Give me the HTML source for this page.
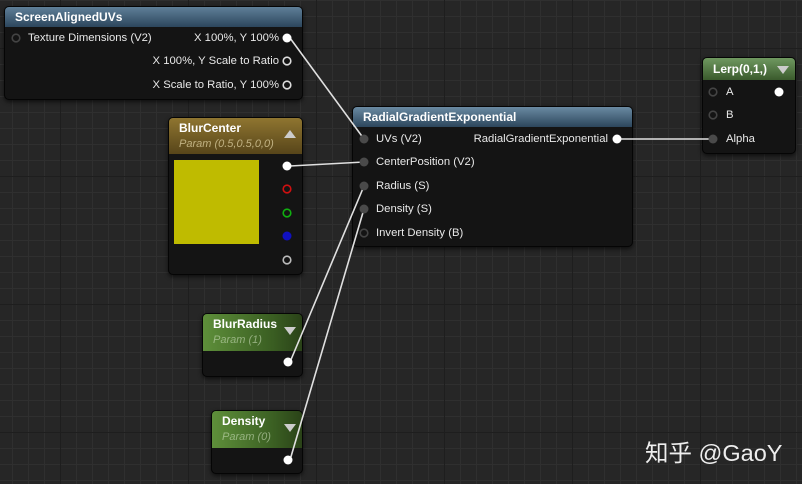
<!DOCTYPE html>
<html><head><meta charset="utf-8"><style>
body{margin:0;width:802px;height:484px;overflow:hidden;font-family:"Liberation Sans",sans-serif;}
#bg{position:absolute;left:0;top:0;width:802px;height:484px;background-color:#262626;
background-image:linear-gradient(#1e1e1e 1px,transparent 1px),linear-gradient(90deg,#1e1e1e 1px,transparent 1px),linear-gradient(#2f2f2f 1px,transparent 1px),linear-gradient(90deg,#2f2f2f 1px,transparent 1px);
background-size:128px 128px,128px 128px,16px 16px,16px 16px;background-position:60px 48px,60px 48px,12px 0,12px 0;}
.n{position:absolute;background:#141414;border:1px solid #050505;border-radius:5px;box-shadow:0 2px 4px rgba(0,0,0,.6);overflow:hidden}
.h{color:#fff;font-weight:bold;font-size:12px;padding-left:10px;box-sizing:border-box}
.t{position:absolute;color:#e8e8e8;font-size:11.3px;white-space:nowrap}
.sub{color:#bfbfbf;font-style:italic;font-weight:normal;font-size:11px;opacity:.6}
svg{position:absolute;left:0;top:0}
</style></head><body>
<div id="bg"></div>
<div class="n" style="left:4px;top:6px;width:297px;height:92px"><div class="h" style="height:20px;line-height:20px;background:linear-gradient(#5f7f98,#2c465c)">ScreenAlignedUVs</div></div>
<div class="n" style="left:168px;top:117px;width:133px;height:156px"><div class="h" style="height:36px;padding-top:3px;line-height:15px;background:linear-gradient(#8f7530,#57451a)">BlurCenter<br><span class="sub" style="opacity:.8;color:#d6c89a">Param (0.5,0.5,0,0)</span></div>
<div style="position:absolute;left:5px;top:42px;width:85px;height:84px;background:#bfbb00"></div>
<div style="position:absolute;right:6px;top:12px;width:0;height:0;border-left:6px solid transparent;border-right:6px solid transparent;border-bottom:8px solid #ccc"></div></div>
<div class="n" style="left:352px;top:106px;width:279px;height:139px"><div class="h" style="height:20px;line-height:20px;background:linear-gradient(#6a8aa2,#2c465c)">RadialGradientExponential</div></div>
<div class="n" style="left:702px;top:57px;width:92px;height:95px"><div class="h" style="height:22px;line-height:22px;background:linear-gradient(#6f9860,#3a5a2c)">Lerp(0,1,)</div>
<div style="position:absolute;right:6px;top:8px;border-left:6px solid transparent;border-right:6px solid transparent;border-top:8px solid #ccc"></div></div>
<div class="n" style="left:202px;top:313px;width:99px;height:62px"><div class="h" style="height:37px;padding-top:3px;line-height:15px;background:linear-gradient(90deg,#5e8f3a,#3a5e22 70%,#2a4218)">BlurRadius<br><span class="sub" style="color:#c9dcb8">Param (1)</span></div>
<div style="position:absolute;right:6px;top:13px;border-left:6px solid transparent;border-right:6px solid transparent;border-top:8px solid #ccc"></div></div>
<div class="n" style="left:211px;top:410px;width:90px;height:62px"><div class="h" style="height:37px;padding-top:3px;line-height:15px;background:linear-gradient(90deg,#5e8f3a,#3a5e22 70%,#2a4218)">Density<br><span class="sub" style="color:#c9dcb8">Param (0)</span></div>
<div style="position:absolute;right:6px;top:13px;border-left:6px solid transparent;border-right:6px solid transparent;border-top:8px solid #ccc"></div></div>

<div class="t" style="left:28px;top:32px">Texture Dimensions (V2)</div>
<div class="t" style="right:523px;top:32px">X 100%, Y 100%</div>
<div class="t" style="right:523px;top:55px">X 100%, Y Scale to Ratio</div>
<div class="t" style="right:523px;top:79px">X Scale to Ratio, Y 100%</div>
<div class="t" style="left:376px;top:133px">UVs (V2)</div>
<div class="t" style="left:376px;top:156px">CenterPosition (V2)</div>
<div class="t" style="left:376px;top:180px">Radius (S)</div>
<div class="t" style="left:376px;top:203px">Density (S)</div>
<div class="t" style="left:376px;top:227px">Invert Density (B)</div>
<div class="t" style="right:194px;top:133px">RadialGradientExponential</div>
<div class="t" style="left:726px;top:86px">A</div>
<div class="t" style="left:726px;top:109px">B</div>
<div class="t" style="left:726px;top:133px">Alpha</div>
<div style="position:absolute;left:645px;top:434px;color:#eee;font-size:23.5px;font-family:'Liberation Sans','Noto Sans CJK SC',sans-serif;white-space:nowrap">知乎 @GaoY</div>

<svg width="802" height="484">
<g stroke="#e0e0e0" stroke-width="1.6" fill="none">
<path d="M290 38 L364 139"/><path d="M290 166 L364 162"/><path d="M290 362 L364 186"/><path d="M290 460 L364 209"/><path d="M620 139 L712 139"/>
</g>
<g fill="#fff"><circle cx="287" cy="38" r="4.5"/><circle cx="287" cy="166" r="4.5"/><circle cx="288" cy="362" r="4.5"/><circle cx="288" cy="460" r="4.5"/><circle cx="617" cy="139" r="4.5"/><circle cx="779" cy="92" r="4.5"/></g>
<g fill="none" stroke-width="1.6"><circle cx="287" cy="61" r="3.8" stroke="#ddd"/><circle cx="287" cy="85" r="3.8" stroke="#ddd"/><circle cx="287" cy="189" r="3.8" stroke="#d01010"/><circle cx="287" cy="213" r="3.8" stroke="#10b010"/><circle cx="287" cy="260" r="3.8" stroke="#bbb"/>
<circle cx="16" cy="38" r="3.8" stroke="#444"/><circle cx="364" cy="233" r="3.8" stroke="#444"/><circle cx="713" cy="92" r="3.8" stroke="#444"/><circle cx="713" cy="115" r="3.8" stroke="#444"/></g>
<circle cx="287" cy="236" r="4.5" fill="#1010c0"/>
<g fill="#4a4a4a"><circle cx="364" cy="139" r="4.5"/><circle cx="364" cy="162" r="4.5"/><circle cx="364" cy="186" r="4.5"/><circle cx="364" cy="209" r="4.5"/><circle cx="713" cy="139" r="4.5"/></g>
</svg>
</body></html>
